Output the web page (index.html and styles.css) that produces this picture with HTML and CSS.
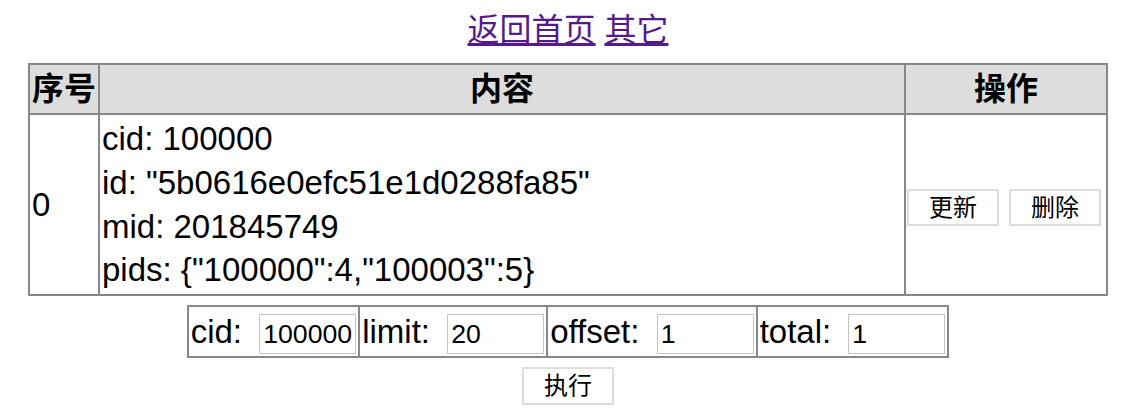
FILE: index.html
```html
<!DOCTYPE html>
<html lang="zh">
<head>
<meta charset="utf-8">
<title>列表</title>
<link rel="stylesheet" href="styles.css">
</head>
<body>
<div class="nav"><a href="#">返回首页</a> <a href="#">其它</a></div>
<table class="list">
  <colgroup>
    <col class="c-idx">
    <col class="c-content">
    <col class="c-op">
  </colgroup>
  <thead>
    <tr><th>序号</th><th>内容</th><th>操作</th></tr>
  </thead>
  <tbody>
    <tr>
      <td class="idx">0</td>
      <td class="content">
        <div>cid: 100000</div>
        <div>id: "5b0616e0efc51e1d0288fa85"</div>
        <div>mid: 201845749</div>
        <div>pids: {"100000":4,"100003":5}</div>
      </td>
      <td class="op"><button class="btn">更新</button><button class="btn">删除</button></td>
    </tr>
  </tbody>
</table>
<table class="query">
  <tr>
    <td>cid: <input class="field" value="100000"></td>
    <td>limit: <input class="field" value="20"></td>
    <td>offset: <input class="field" value="1"></td>
    <td>total: <input class="field" value="1"></td>
  </tr>
</table>
<div class="actions"><button class="btn">执行</button></div>
</body>
</html>
```
FILE: styles.css
```css
body {
  margin: 8px;
  font-family: "Liberation Sans", "Noto Sans CJK SC", sans-serif;
  font-size: 32px;
  color: #000;
  background: #fff;
}
.nav {
  text-align: center;
  line-height: 44px;
  margin-bottom: 11px;
}
.nav a {
  color: #551a8b;
  text-decoration: underline;
}
table {
  border-collapse: collapse;
  margin: 0 auto;
}
td, th {
  border: 2px solid #888;
  padding: 2px;
  line-height: 44px;
}
.list {
  width: 1080px;
  table-layout: fixed;
}
.c-idx { width: 70px; }
.c-op { width: 202px; }
.list th {
  background: #ddd;
  font-weight: bold;
  text-align: center;
}
.list td {
  vertical-align: middle;
  text-align: left;
}
.idx, .content {
  font-size: 33px;
}
.content div {
  line-height: 43.75px;
}
.op {
  padding: 0 1px;
  white-space: nowrap;
}
.btn {
  font-family: "Liberation Sans", "Noto Sans CJK SC", sans-serif;
  font-size: 24px;
  line-height: 29px;
  background: #fff;
  border: 2px solid #ddd;
  padding: 2px 20px;
  margin: 0;
  color: #000;
}
.op .btn + .btn {
  margin-left: 10px;
}
.query {
  margin-top: 9px;
}
.query td {
  white-space: nowrap;
  padding: 2px;
  font-size: 33px;
  line-height: 45px;
}
.field {
  font-family: "Liberation Sans", sans-serif;
  font-size: 26.67px;
  width: 97px;
  height: 40px;
  box-sizing: border-box;
  border: 1px solid #c4c4c4;
  padding: 2px 3px;
  margin: 0 0 0 8px;
  vertical-align: middle;
}
.actions {
  text-align: center;
  margin-top: 7px;
}
.actions .btn {
  line-height: 30px;
}
```
